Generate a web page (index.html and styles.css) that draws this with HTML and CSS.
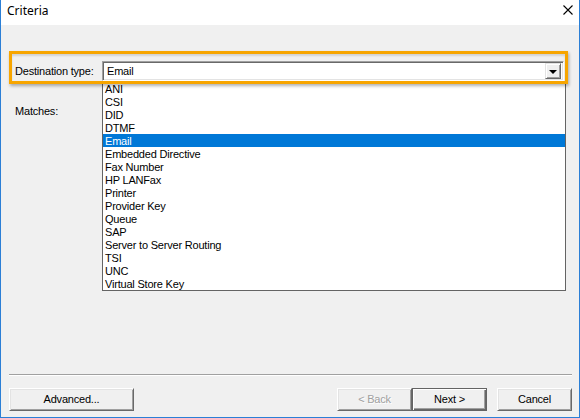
FILE: index.html
```html
<!DOCTYPE html>
<html>
<head>
<meta charset="utf-8">
<link rel="stylesheet" href="styles.css">
</head>
<body>
<div class="dialog">
  <div class="titlebar">
    <span class="title">Criteria</span>
    <svg class="close" width="10" height="10" viewBox="0 0 10 10"><path d="M0.5 0.5 L9.5 9.5 M9.5 0.5 L0.5 9.5" stroke="#000" stroke-width="1.1" fill="none"/></svg>
  </div>
  <div class="content">
    <div class="highlight">
      <span class="label">Destination type:</span>
      <div class="combo">
        <span class="combo-text">Email</span>
        <span class="combo-btn"><span class="tri"></span></span>
      </div>
      <ul class="droplist">
        <li>ANI</li>
        <li>CSI</li>
        <li>DID</li>
        <li>DTMF</li>
        <li class="sel">Email</li>
        <li>Embedded Directive</li>
        <li>Fax Number</li>
        <li>HP LANFax</li>
        <li>Printer</li>
        <li>Provider Key</li>
        <li>Queue</li>
        <li>SAP</li>
        <li>Server to Server Routing</li>
        <li>TSI</li>
        <li>UNC</li>
        <li>Virtual Store Key</li>
      </ul>
    </div>
    <div class="matches">Matches:</div>
    <div class="spacer"></div>
    <div class="separator"></div>
    <div class="buttons">
      <button class="btn wide">Advanced...</button>
      <div class="right">
        <button class="btn disabled">&lt; Back</button>
        <button class="btn default">Next &gt;</button>
        <button class="btn cancel">Cancel</button>
      </div>
    </div>
  </div>
</div>
</body>
</html>
```
FILE: styles.css
```css
html, body {
  margin: 0;
  padding: 0;
}
body {
  font-family: "Liberation Sans", Arial, sans-serif;
  font-size: 11px;
  letter-spacing: -0.2px;
  color: #000;
}
.dialog {
  width: 580px;
  height: 418px;
  box-sizing: border-box;
  border: 1px solid #2b7fd6;
  border-top: none;
  display: flex;
  flex-direction: column;
  overflow: hidden;
}
.titlebar {
  height: 25px;
  flex: none;
  background: #fff;
  display: flex;
  align-items: center;
  justify-content: space-between;
  padding: 0 6px 0 6px;
}
.title {
  font-family: "Noto Sans", "Open Sans", sans-serif;
  font-size: 12px;
  letter-spacing: 0;
  line-height: 14px;
  margin-top: -4px;
}
.close {
  display: block;
  margin-top: -5px;
}
.content {
  flex: 1;
  background: #f0f0f0;
  display: flex;
  flex-direction: column;
  padding: 26px 7px 6px 8px;
}
.highlight {
  position: relative;
  width: 559px;
  height: 33px;
  box-sizing: border-box;
  padding: 10px 0 3px 6px;
  display: flex;
  align-items: center;
}
.highlight::after {
  content: "";
  position: absolute;
  left: 0;
  top: 0;
  right: 0;
  bottom: 0;
  border: 3px solid #f7a500;
  box-shadow: 1px 2px 3px rgba(0,0,0,0.3), inset 0 2px 2px rgba(0,0,0,0.12);
  z-index: 3;
  pointer-events: none;
}
.label {
  width: 87px;
  flex: none;
  line-height: 13px;
}
.combo {
  width: 462px;
  height: 20px;
  box-sizing: border-box;
  background: #fff;
  border-top: 1px solid #a0a0a0;
  border-left: 1px solid #a0a0a0;
  border-right: 1px solid #fff;
  border-bottom: 1px solid #fff;
  box-shadow: inset 1px 1px 0 #696969, inset -1px -1px 0 #e3e3e3;
  display: flex;
  align-items: center;
  justify-content: space-between;
  padding: 2px 2px 2px 4px;
}
.combo-text {
  line-height: 13px;
}
.combo-btn {
  width: 16px;
  height: 16px;
  box-sizing: border-box;
  background: #f0f0f0;
  border-top: 1px solid #e3e3e3;
  border-left: 1px solid #e3e3e3;
  border-right: 1px solid #696969;
  border-bottom: 1px solid #696969;
  box-shadow: inset 1px 1px 0 #fff, inset -1px -1px 0 #a0a0a0;
  display: flex;
  align-items: center;
  justify-content: center;
}
.tri {
  width: 0;
  height: 0;
  border-left: 4px solid transparent;
  border-right: 4px solid transparent;
  border-top: 4px solid #000;
  margin-top: 1px;
}
.droplist {
  position: absolute;
  left: 93px;
  top: 30px;
  width: 464px;
  box-sizing: border-box;
  margin: 0;
  padding: 0;
  list-style: none;
  background: #fff;
  border: 1px solid #646464;
  z-index: 2;
}
.droplist li {
  height: 13px;
  line-height: 14px;
  padding-left: 2px;
  white-space: nowrap;
}
.droplist li.sel {
  background: #0078d7;
  color: #fff;
}
.matches {
  margin: 21px 0 0 6px;
  line-height: 13px;
}
.spacer {
  flex: 1;
}
.separator {
  border-top: 1px solid #a0a0a0;
  border-bottom: 1px solid #fff;
  height: 0;
}
.buttons {
  margin-top: 12px;
  display: flex;
  justify-content: space-between;
}
.right {
  display: flex;
}
.btn {
  font-family: "Liberation Sans", Arial, sans-serif;
  font-size: 11px;
  letter-spacing: -0.2px;
  height: 23px;
  width: 75px;
  box-sizing: border-box;
  margin: 0;
  padding: 0;
  background: #f0f0f0;
  color: #000;
  border-top: 1px solid #fff;
  border-left: 1px solid #fff;
  border-right: 1px solid #696969;
  border-bottom: 1px solid #696969;
  box-shadow: inset 1px 1px 0 #e3e3e3, inset -1px -1px 0 #a0a0a0;
  text-align: center;
  line-height: 19px;
}
.btn.wide {
  width: 125px;
}
.btn.disabled {
  color: #a0a0a0;
  text-shadow: 1px 1px 0 #fff;
}
.btn.default {
  border: 1px solid #646464;
  box-shadow: inset 1px 1px 0 #fff, inset -1px -1px 0 #696969, inset -2px -2px 0 #a0a0a0;
}
.btn.cancel {
  margin-left: 10px;
}
```
